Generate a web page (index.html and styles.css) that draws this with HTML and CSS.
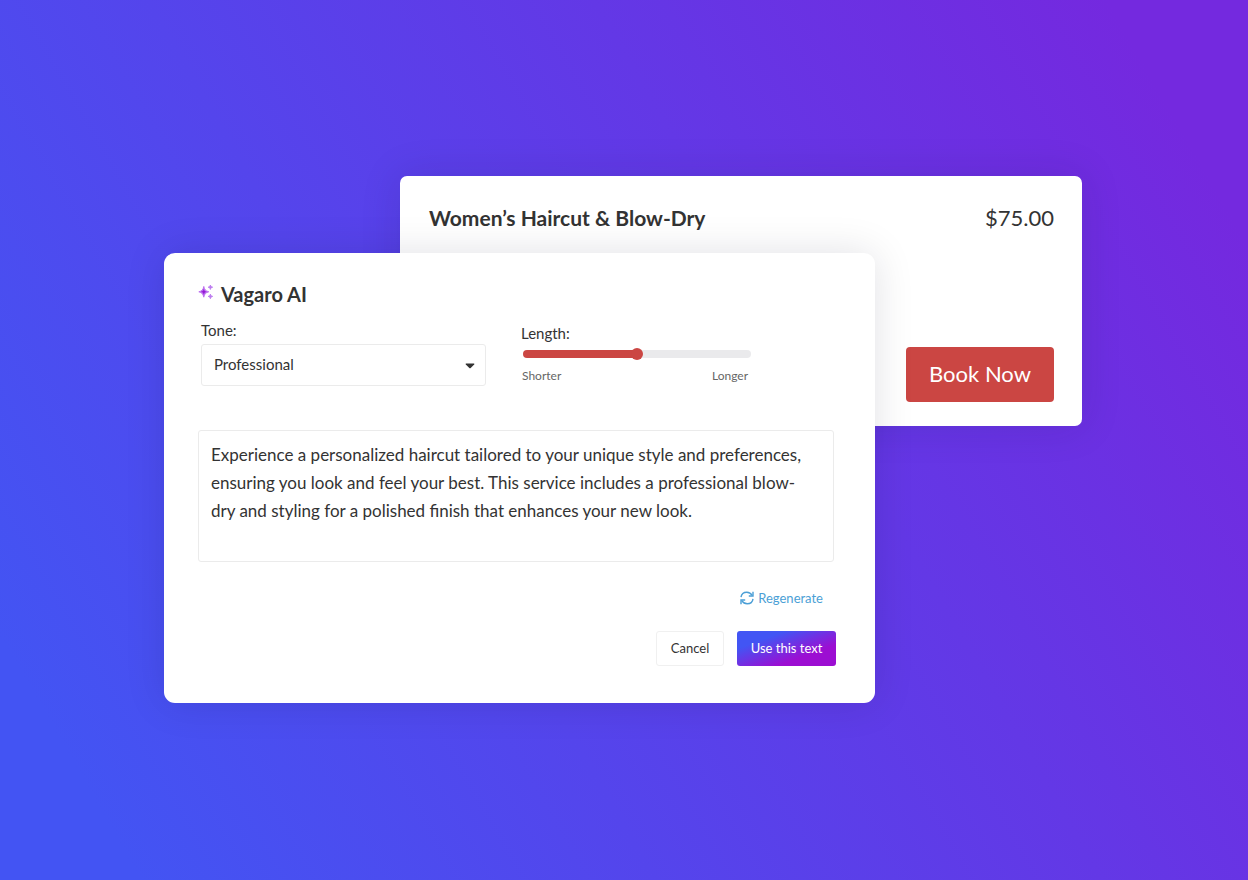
FILE: index.html
```html
<!DOCTYPE html>
<html lang="en">
  <head>
    <meta charset="UTF-8" />
    <meta name="viewport" content="width=device-width, initial-scale=1.0" />
    <title>Vagaro AI</title>
    <link rel="stylesheet" href="styles.css">
  </head>
  <body>
    <main class="stage">
      <!-- Service card -->
      <section class="service-card">
        <div class="service-header">
          <h2>Women’s Haircut &amp; Blow-Dry</h2>
          <span class="price">$75.00</span>
        </div>
        <button type="button" class="book-btn">Book Now</button>
      </section>

      <!-- AI text generator -->
      <form class="ai-card">
        <h3 class="ai-title">
          <svg width="16" height="16" viewBox="0 0 16 16" aria-hidden="true">
            <path fill="#b763ee" stroke="#b763ee" stroke-width="0.8" stroke-linejoin="round" d="M5.8 2.4 C6.6 5.9 7.6 6.8 10.8 7.8 C7.6 8.8 6.6 9.7 5.8 13.2 C5 9.7 4 8.8 0.8 7.8 C4 6.8 5 5.9 5.8 2.4Z" />
            <path fill="#9418d4" d="M5.8 5 C6.2 6.9 6.9 7.5 8.8 7.8 C6.9 8.1 6.2 8.8 5.8 10.6 C5.4 8.8 4.7 8.1 2.8 7.8 C4.7 7.5 5.4 6.9 5.8 5Z" />
            <path fill="#bd7bf0" stroke="#bd7bf0" stroke-width="1" stroke-linejoin="round" d="M12.4 1 C12.8 2.5 13.2 2.9 14.6 3.2 C13.2 3.5 12.8 3.9 12.4 5.4 C12 3.9 11.6 3.5 10.2 3.2 C11.6 2.9 12 2.5 12.4 1Z" />
            <path fill="#bd7bf0" stroke="#bd7bf0" stroke-width="1" stroke-linejoin="round" d="M12.4 10.2 C12.8 11.7 13.2 12.1 14.6 12.4 C13.2 12.7 12.8 13.1 12.4 14.6 C12 13.1 11.6 12.7 10.2 12.4 C11.6 12.1 12 11.7 12.4 10.2Z" />
          </svg>
          Vagaro AI
        </h3>

        <div class="options">
          <div class="tone">
            <label for="tone">Tone:</label>
            <div class="select-wrap">
              <select id="tone">
                <option>Professional</option>
              </select>
              <svg class="caret" width="10" height="6" viewBox="0 0 10 6" aria-hidden="true">
                <path fill="#333" d="M1.2 0.5 H8.8 Q9.8 0.6 9.2 1.4 L5.7 5 Q5 5.6 4.3 5 L0.8 1.4 Q0.2 0.6 1.2 0.5Z" />
              </svg>
            </div>
          </div>
          <div class="length">
            <label for="length">Length:</label>
            <input type="range" id="length" min="0" max="100" value="50" />
            <div class="range-labels">
              <span>Shorter</span>
              <span>Longer</span>
            </div>
          </div>
        </div>

        <textarea class="result" aria-label="Generated text" spellcheck="false">Experience a personalized haircut tailored to your unique style and preferences, ensuring you look and feel your best. This service includes a professional blow-dry and styling for a polished finish that enhances your new look.</textarea>

        <button type="button" class="regenerate">
          <svg width="14" height="14" viewBox="0 0 14 14" fill="none" stroke="#4b9fd6" stroke-width="1.4" aria-hidden="true">
            <path d="M1 6.2 C1.4 3.2 3.8 1.2 6.8 1.2 C9.2 1.2 11 2.4 12.2 4.4" />
            <path d="M13 0.8 V5 H8.8" />
            <path d="M13 7.8 C12.6 10.8 10.2 12.8 7.2 12.8 C4.8 12.8 3 11.6 1.8 9.6" />
            <path d="M1 13.2 V9 H5.2" />
          </svg>
          Regenerate
        </button>

        <div class="button-group">
          <button type="button" class="cancel-btn">Cancel</button>
          <button type="button" class="use-btn">Use this text</button>
        </div>
      </form>
    </main>
  </body>
</html>
```
FILE: styles.css
```css
* {
  box-sizing: border-box;
}
body {
  margin: 0;
  min-height: 100vh;
  display: flex;
  align-items: center;
  justify-content: center;
  padding: 24px 26px 26px 24px;
  font-family: Lato, "Open Sans", sans-serif;
  color: #333;
  background: linear-gradient(60deg, #4354f3 8%, #7429df 92%);
}
button,
select,
textarea {
  font-family: inherit;
  color: inherit;
}
button {
  cursor: pointer;
}

/* The two cards share one row and overlap */
.stage {
  display: grid;
  grid-template-columns: 236fr 475fr 207fr;
  align-items: start;
  width: 100%;
  max-width: 918px;
}
.service-card {
  grid-column: 2 / 4;
  grid-row: 1;
  min-height: 250px;
  display: flex;
  flex-direction: column;
  justify-content: space-between;
  padding: 27px 28px 24px 29px;
  background: #fff;
  border-radius: 7px;
  box-shadow: 0 0 40px rgba(30, 20, 80, 0.14);
}
.service-header {
  display: flex;
  justify-content: space-between;
  font-size: 22px;
  line-height: 30px;
}
.service-header h2 {
  margin: 0;
  font-size: 21px;
}
.book-btn {
  align-self: flex-end;
  width: 148px;
  height: 55px;
  padding: 0 0 2px;
  border: none;
  border-radius: 4px;
  background: #cb4643;
  color: #fff;
  font-size: 22px;
}

.ai-card {
  grid-column: 1 / 3;
  grid-row: 1;
  margin-top: 77px;
  padding: 27px 39px 37px 34px;
  display: flex;
  flex-direction: column;
  background: #fff;
  border-radius: 11px;
  box-shadow: 0 0 40px rgba(20, 20, 40, 0.12);
}
.ai-title {
  display: flex;
  gap: 7px;
  margin: 0;
  font-size: 20px;
  line-height: 28px;
}
.ai-title svg {
  margin-top: 4px;
}
.options {
  display: flex;
  gap: 35px;
  padding-left: 3px;
  margin-top: 12px;
}
.options label {
  display: block;
  font-size: 15px;
  line-height: 20px;
}
.tone {
  flex: 0 1 285px;
}
.select-wrap {
  position: relative;
  margin-top: 4px;
}
.select-wrap select {
  appearance: none;
  width: 100%;
  height: 42px;
  padding: 0 12px 2px;
  border: 1px solid #ebebeb;
  border-radius: 3px;
  background: #fff;
  font-size: 15px;
}
.caret {
  position: absolute;
  right: 11px;
  top: 19px;
  pointer-events: none;
}
.length {
  flex: 0 1 230px;
  padding-top: 3px;
}
.length input {
  appearance: none;
  display: block;
  width: calc(100% - 2px);
  height: 12px;
  margin: 5px 0 0 2px;
  background: none;
}
.length input::-webkit-slider-runnable-track {
  height: 8px;
  border-radius: 4px;
  background: linear-gradient(to right, #cb4643 50%, #eaeaec 50%);
}
.length input::-webkit-slider-thumb {
  appearance: none;
  width: 12px;
  height: 12px;
  margin-top: -2px;
  border-radius: 50%;
  background: #cb4643;
}
.range-labels {
  display: flex;
  justify-content: space-between;
  padding: 0 3px 0 1px;
  margin-top: 8px;
  font-size: 12px;
  line-height: 16px;
  color: #666;
}
.result {
  display: block;
  width: calc(100% - 2px);
  height: 132px;
  margin-top: 44px;
  padding: 10px 20px 10px 12px;
  border: 1px solid #ebebeb;
  border-radius: 3px;
  resize: none;
  font-size: 17px;
  line-height: 28px;
}
.regenerate {
  align-self: flex-end;
  display: flex;
  align-items: center;
  gap: 4px;
  margin: 26px 13px 0 0;
  padding: 0;
  border: none;
  background: none;
  color: #4b9fd6;
  font-size: 13px;
  line-height: 20px;
}
.button-group {
  display: flex;
  justify-content: flex-end;
  gap: 13px;
  margin-top: 23px;
}
.button-group button {
  height: 35px;
  border-radius: 3px;
  font-size: 13px;
}
.cancel-btn {
  width: 68px;
  padding: 0;
  border: 1px solid #f0f0f0;
  background: #fff;
}
.button-group .use-btn {
  width: 99px;
  padding: 0;
  border: none;
  background: linear-gradient(160deg, #4255f4 25%, #9c0ed2 70%);
  color: #fff;
}
```
